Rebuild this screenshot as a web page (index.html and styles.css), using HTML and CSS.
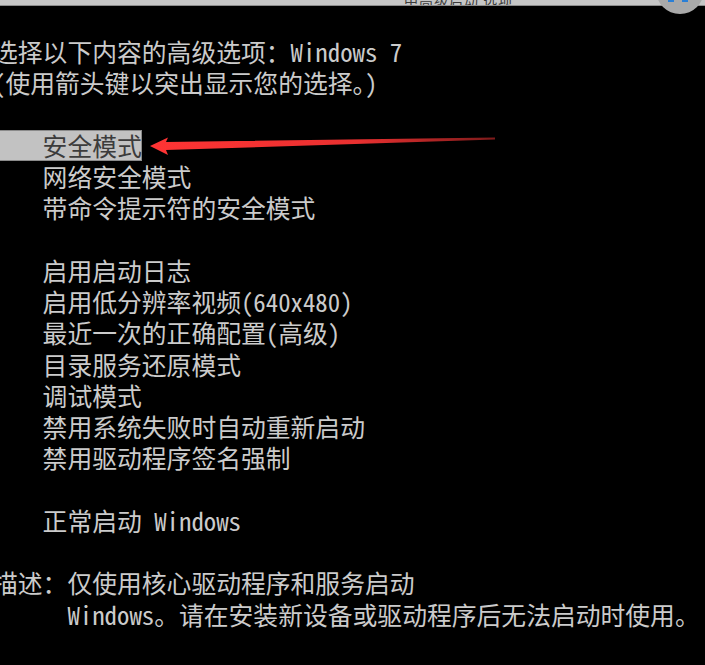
FILE: index.html
```html
<!DOCTYPE html>
<html lang="zh-CN">
<head>
    <meta charset="UTF-8">
    <meta name="viewport" content="width=device-width, initial-scale=1.0">
    <title>高级启动选项</title>
    <link rel="stylesheet" href="styles.css">
</head>
<body>
    <div class="titlebar"><span class="title">中高级启动 选项</span></div>
    <div class="badge"><span></span><span></span></div>

    <main class="console">
        <div class="line">选择以下内容的高级选项：Windows 7</div>
        <div class="line">(使用箭头键以突出显示您的选择。)</div>
        <div class="line"></div>
        <div class="line"><span class="selected">    安全模式</span></div>
        <div class="line">    网络安全模式</div>
        <div class="line">    带命令提示符的安全模式</div>
        <div class="line"></div>
        <div class="line">    启用启动日志</div>
        <div class="line">    启用低分辨率视频(640x480)</div>
        <div class="line">    最近一次的正确配置(高级)</div>
        <div class="line">    目录服务还原模式</div>
        <div class="line">    调试模式</div>
        <div class="line">    禁用系统失败时自动重新启动</div>
        <div class="line">    禁用驱动程序签名强制</div>
        <div class="line"></div>
        <div class="line">    正常启动 Windows</div>
        <div class="line"></div>
        <div class="line">描述：仅使用核心驱动程序和服务启动</div>
        <div class="line">      Windows。请在安装新设备或驱动程序后无法启动时使用。</div>
    </main>

    <!-- red pointer drawn over the screenshot -->
    <svg class="arrow" viewBox="0 0 705 665" width="705" height="665">
        <defs>
            <linearGradient id="fade" x1="150" y1="0" x2="500" y2="0" gradientUnits="userSpaceOnUse">
                <stop offset="0" stop-color="#ff3434"/>
                <stop offset="0.6" stop-color="#e83030"/>
                <stop offset="1" stop-color="#7a1a1a"/>
            </linearGradient>
        </defs>
        <polygon fill="url(#fade)" points="150,146 168,137.5 166,142 495,137.5 495,139.5 166,150 168,155"/>
    </svg>
</body>
</html>
```

FILE: styles.css
```css
body {
    margin: 0;
    background-color: #000;
    overflow: hidden;
}
.titlebar {
    height: 5px;
    background-color: #c6c6c6;
    border-bottom: 1px solid #8c8c8c;
    overflow: hidden;
    display: flex;
    align-items: flex-end;
    padding-left: 404px;
}
.title {
    font-family: "Noto Sans CJK SC", sans-serif;
    font-size: 14px;
    line-height: 14px;
    margin-bottom: -2px;
    color: #3a3a3a;
    letter-spacing: 1px;
}
.badge {
    position: absolute;
    left: 656px;
    top: -34px;
    width: 48px;
    height: 48px;
    border-radius: 50%;
    background-color: #a9a9a9;
}
.badge span {
    position: absolute;
    bottom: 12px;
    width: 6px;
    height: 3px;
    background-color: #2a7fd6;
}
.badge span:first-child {
    left: 12px;
}
.badge span:last-child {
    left: 26px;
}
.console {
    margin-left: -7px;
    padding-top: 30px;
    font-family: "Noto Sans Mono CJK SC", "Noto Sans CJK SC", monospace;
    font-size: 24.8px;
    line-height: 31.25px;
    color: #cbcbcb;
}
.line {
    height: 31.25px;
    white-space: pre;
}
.selected {
    display: inline-block;
    background-color: #c2c2c2;
    color: #3c3c3c;
    box-shadow: inset 0 0 0 1px #8a8a8a;
}
.arrow {
    position: absolute;
    left: 0;
    top: 0;
    pointer-events: none;
}
```
